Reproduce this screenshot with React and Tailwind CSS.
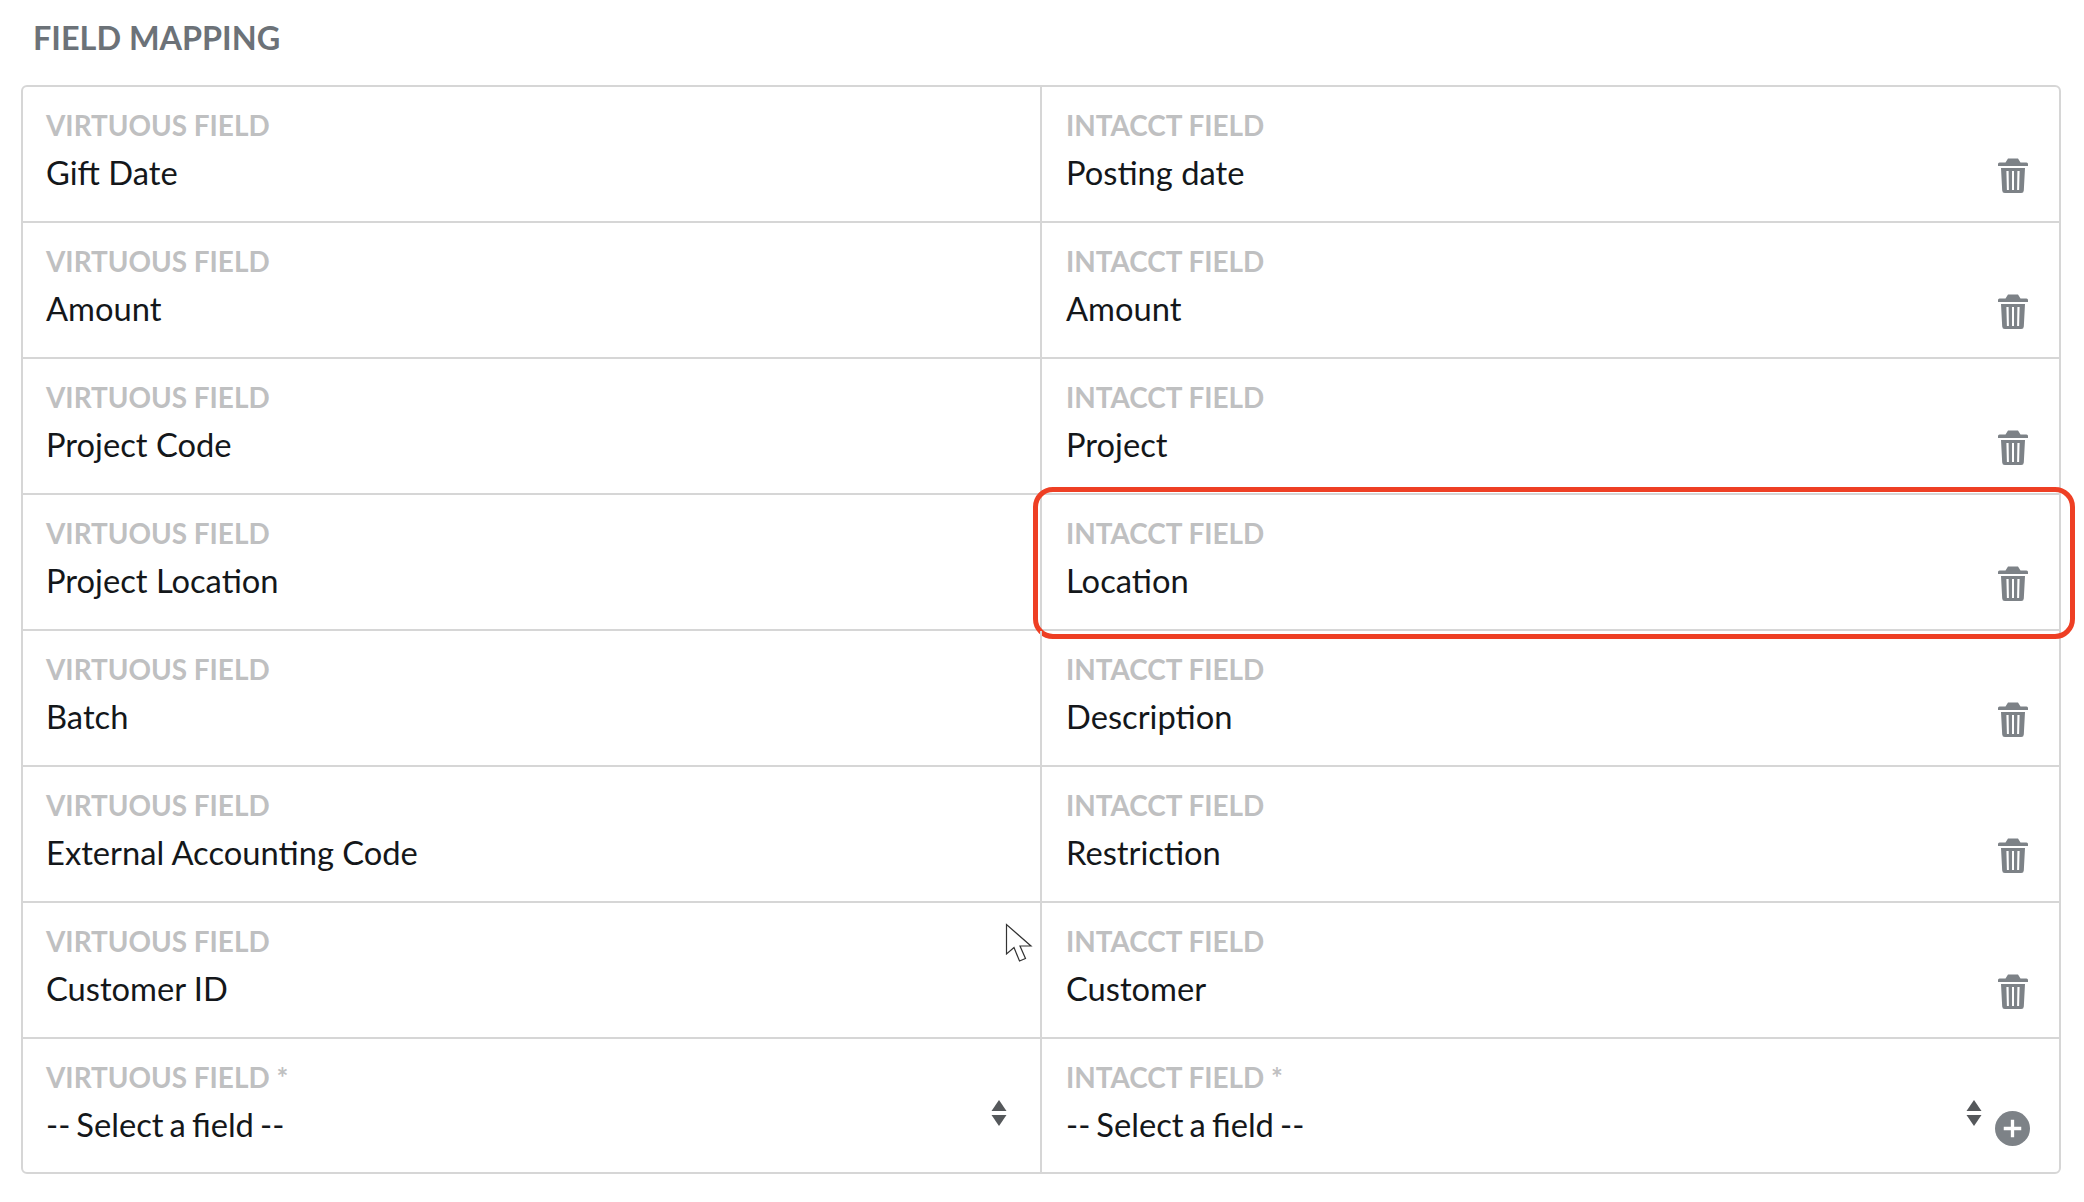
import React from 'react';

const ROWS = [
  ['Gift Date', 'Posting date'],
  ['Amount', 'Amount'],
  ['Project Code', 'Project'],
  ['Project Location', 'Location'],
  ['Batch', 'Description'],
  ['External Accounting Code', 'Restriction'],
  ['Customer ID', 'Customer'],
];

function TrashIcon() {
  return (
    <svg className="w-[30px] h-[35px] text-[#7d8287] mb-[28px]" viewBox="0 0 30 35" fill="currentColor">
      <path d="M10 0.5 h10 l2.5 4 h6 a1.5 1.5 0 0 1 1.5 1.5 v2 h-30 v-2 a1.5 1.5 0 0 1 1.5 -1.5 h6 z" />
      <path fillRule="evenodd" d="M3 10 h24 l-1.2 22.5 a2.6 2.6 0 0 1 -2.6 2.5 h-16.4 a2.6 2.6 0 0 1 -2.6 -2.5 z M8.4 13 l0.5 19 h2 l-0.3 -19 z M14 13 v19 h2 v-19 z M19.4 13 l-0.3 19 h2 l0.5 -19 z" />
    </svg>
  );
}

function SortArrows() {
  return (
    <svg className="w-4 h-[26px] text-[#55585b] mb-[46px]" viewBox="0 0 16 26" fill="currentColor">
      <path d="M8 0 L15.5 11 H0.5 Z" />
      <path d="M0.5 15 H15.5 L8 26 Z" />
    </svg>
  );
}

function PlusIcon() {
  return (
    <svg className="w-[35px] h-[35px] mb-[26px]" viewBox="0 0 36 36">
      <circle cx="18" cy="18" r="18" fill="#7d8287" />
      <path d="M18 9 V27 M9 18 H27" stroke="#fff" strokeWidth="3.4" />
    </svg>
  );
}

function Cursor() {
  return (
    <svg className="absolute left-[-37px] top-[20px] w-[28px] h-[40px]" viewBox="0 0 28 40">
      <path d="M1.5 1.5 V31 L9 24.5 L14.5 38 L20.5 35.5 L15 23 H26 Z" fill="#fff" stroke="#333" strokeWidth="1.2" strokeLinejoin="miter" />
    </svg>
  );
}

function Cell({ label, value, children, className = '', valueClass = '' }) {
  return (
    <div className={`relative flex items-end justify-between ${className}`}>
      <div className="self-start pt-[20px]">
        <div className="text-[27.9px] leading-[36px] font-bold text-[#bfc0c1]">{label}</div>
        <div className={`mt-[6px] text-[32.7px] leading-[48px] text-[#14171a] ${valueClass}`}>{value}</div>
      </div>
      {children}
    </div>
  );
}

export default function App() {
  return (
    <div className="w-[2084px] h-[1202px] overflow-hidden bg-white pl-[21px] pr-[24px] font-['Lato','Open_Sans',sans-serif]">
      <h2 className="pl-[12px] pt-[16px] h-[85px] text-[32.4px] leading-[44px] font-bold text-[#6c7278]">FIELD MAPPING</h2>

      <div className="border-2 border-[#d6d6d6] rounded-[6px] w-[2040px]">
        {ROWS.map(([left, right], idx) => (
          <div key={idx} className="grid grid-cols-[1019px_1fr] h-[136px] border-b-2 border-[#d6d6d6]">
            <Cell label="VIRTUOUS FIELD" value={left} className="border-r-2 border-[#d6d6d6] pl-[23px]" />
            <Cell label="INTACCT FIELD" value={right} className="pl-[24px] pr-[31px]">
              <TrashIcon />
              {idx === 6 && <Cursor />}
              {idx === 3 && (
                <div className="absolute left-[-9px] right-[-16px] top-[-8px] bottom-[-10px] border-[5px] border-[#ee3f24] rounded-[20px]" />
              )}
            </Cell>
          </div>
        ))}
        <div className="grid grid-cols-[1019px_1fr] h-[133px]">
          <Cell label="VIRTUOUS FIELD *" value="-- Select a field --" valueClass="[word-spacing:-2.3px]" className="border-r-2 border-[#d6d6d6] pl-[23px] pr-[33px]">
            <SortArrows />
          </Cell>
          <Cell label="INTACCT FIELD *" value="-- Select a field --" valueClass="[word-spacing:-2.3px]" className="pl-[24px] pr-[29px]">
            <div className="flex items-end gap-[13px]">
              <SortArrows />
              <PlusIcon />
            </div>
          </Cell>
        </div>
      </div>
    </div>
  );
}
